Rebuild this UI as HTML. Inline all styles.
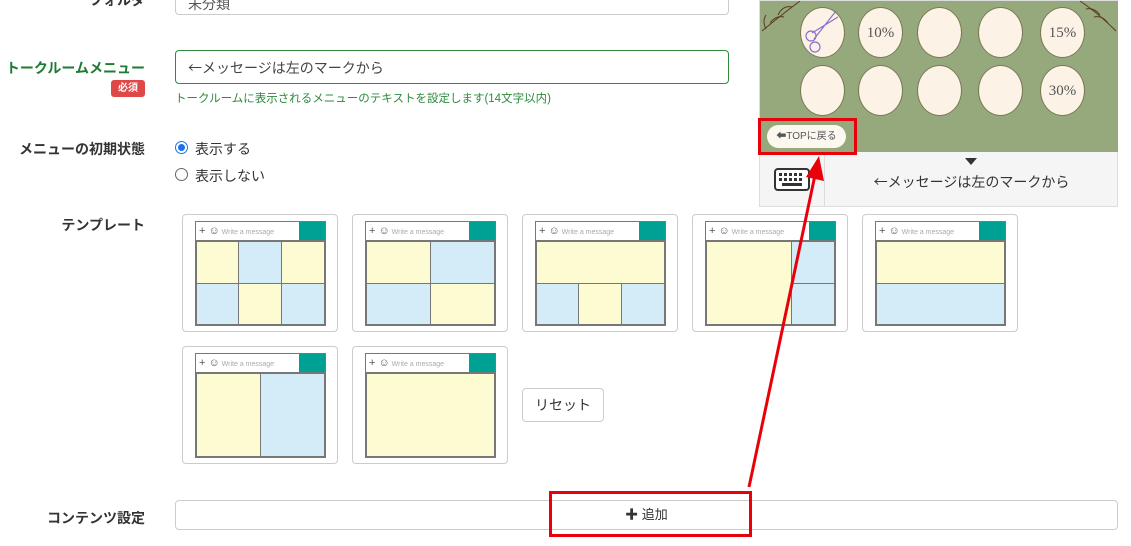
<!DOCTYPE html>
<html><head><meta charset="utf-8"><style>
*{box-sizing:border-box;margin:0;padding:0}
body{width:1131px;height:546px;overflow:hidden;background:#fff;font-family:"Liberation Sans","Noto Sans CJK JP",sans-serif;position:relative;color:#333}
.a{position:absolute}
.ar{font-family:"Noto Sans CJK JP",sans-serif}
.lbl{font-size:14px;font-weight:bold;text-align:right;width:145px;left:0}
.card{position:absolute;width:156px;height:118px;border:1px solid #ccc;border-radius:4px;background:#fff}
.scr{position:absolute;left:12px;top:6px;width:131px;height:105px;border:1px solid #777;background:#fff}
.hd{position:absolute;left:0;top:0;width:100%;height:19px;border-bottom:1px solid #777;font-size:7px;color:#aaa;line-height:18px;padding-left:3px;white-space:nowrap}
.hd b{font-weight:normal;color:#555;font-size:11px}
.tl{position:absolute;right:0;top:0;width:26px;height:18px;background:#00a195}
.c{position:absolute;border:1px solid #777}
.Y{background:#fdfbd1}.B{background:#d3ecf7}
.o{position:absolute;width:45px;height:51px;border-radius:50%;background:#fdf2e6;border:1px solid #7a7a55;font-family:"Liberation Serif",serif;font-size:15px;color:#555;text-align:center;line-height:51px}
</style></head><body>
<div class="a lbl" style="top:-10px">フォルダ</div>
<div class="a" style="left:175px;top:-16px;width:554px;height:31px;border:1px solid #ccc;border-radius:4px;font-size:14px;padding:9px 12px;color:#555">未分類</div>

<div class="a lbl" style="top:58px;color:#1e7b34">トークルームメニュー</div>
<div class="a" style="left:111px;top:80px;width:34px;height:17px;background:#e04848;color:#fff;font-size:10px;font-weight:bold;border-radius:3px;text-align:center;line-height:17px">必須</div>
<div class="a" style="left:175px;top:50px;width:554px;height:34px;border:1px solid #2e8b3e;border-radius:4px;font-size:14px;padding:7px 12px;color:#444"><span class="ar">←</span>メッセージは左のマークから</div>
<div class="a" style="left:175px;top:90px;font-size:11.5px;color:#2e8b3e">トークルームに表示されるメニューのテキストを設定します(14文字以内)</div>

<div class="a lbl" style="top:139px">メニューの初期状態</div>
<div class="a" style="left:175px;top:141px;width:13px;height:13px;border-radius:50%;border:1px solid #1a73e8;background:#fff"><div style="margin:2px;width:7px;height:7px;border-radius:50%;background:#1a73e8"></div></div>
<div class="a" style="left:195px;top:139px;font-size:14px">表示する</div>
<div class="a" style="left:175px;top:168px;width:13px;height:13px;border-radius:50%;border:1px solid #666"></div>
<div class="a" style="left:195px;top:166px;font-size:14px">表示しない</div>

<div class="a lbl" style="top:215px">テンプレート</div>

<div class="card" style="left:182px;top:214px"><div class="scr"><div class="hd"><b>+ ☺</b> Write a message</div><div class="tl"></div>
<div class="c Y" style="left:0;top:19px;width:43px;height:43px"></div><div class="c B" style="left:42px;top:19px;width:44px;height:43px"></div><div class="c Y" style="left:85px;top:19px;width:44px;height:43px"></div>
<div class="c B" style="left:0;top:61px;width:43px;height:42px"></div><div class="c Y" style="left:42px;top:61px;width:44px;height:42px"></div><div class="c B" style="left:85px;top:61px;width:44px;height:42px"></div></div></div>

<div class="card" style="left:352px;top:214px"><div class="scr"><div class="hd"><b>+ ☺</b> Write a message</div><div class="tl"></div>
<div class="c Y" style="left:0;top:19px;width:65px;height:43px"></div><div class="c B" style="left:64px;top:19px;width:65px;height:43px"></div>
<div class="c B" style="left:0;top:61px;width:65px;height:42px"></div><div class="c Y" style="left:64px;top:61px;width:65px;height:42px"></div></div></div>

<div class="card" style="left:522px;top:214px"><div class="scr"><div class="hd"><b>+ ☺</b> Write a message</div><div class="tl"></div>
<div class="c Y" style="left:0;top:19px;width:129px;height:43px"></div>
<div class="c B" style="left:0;top:61px;width:43px;height:42px"></div><div class="c Y" style="left:42px;top:61px;width:44px;height:42px"></div><div class="c B" style="left:85px;top:61px;width:44px;height:42px"></div></div></div>

<div class="card" style="left:692px;top:214px"><div class="scr"><div class="hd"><b>+ ☺</b> Write a message</div><div class="tl"></div>
<div class="c Y" style="left:0;top:19px;width:86px;height:84px"></div><div class="c B" style="left:85px;top:19px;width:44px;height:43px"></div><div class="c B" style="left:85px;top:61px;width:44px;height:42px"></div></div></div>

<div class="card" style="left:862px;top:214px"><div class="scr"><div class="hd"><b>+ ☺</b> Write a message</div><div class="tl"></div>
<div class="c Y" style="left:0;top:19px;width:129px;height:43px"></div><div class="c B" style="left:0;top:61px;width:129px;height:42px"></div></div></div>

<div class="card" style="left:182px;top:346px"><div class="scr"><div class="hd"><b>+ ☺</b> Write a message</div><div class="tl"></div>
<div class="c Y" style="left:0;top:19px;width:65px;height:84px"></div><div class="c B" style="left:64px;top:19px;width:65px;height:84px"></div></div></div>

<div class="card" style="left:352px;top:346px"><div class="scr"><div class="hd"><b>+ ☺</b> Write a message</div><div class="tl"></div>
<div class="c Y" style="left:0;top:19px;width:129px;height:84px"></div></div></div>

<div class="a" style="left:522px;top:388px;width:82px;height:34px;border:1px solid #ccc;border-radius:4px;font-size:14px;text-align:center;line-height:32px">リセット</div>

<div class="a lbl" style="top:508px">コンテンツ設定</div>
<div class="a" style="left:175px;top:500px;width:943px;height:30px;border:1px solid #ccc;border-radius:4px;font-size:13px;text-align:center;line-height:28px;color:#333"><b>✚</b> 追加</div>

<!-- preview -->
<div class="a" style="left:759px;top:0;width:359px;height:207px;border:1px solid #ddd;background:#f5f5f5">
<div class="a" style="left:0;top:0;width:358px;height:151px;background:#95a97d"></div>
<svg class="a" style="left:0;top:0" width="358" height="151"><g stroke="#5a3a22" fill="none" stroke-width="1"><path d="M2 30 Q20 15 40 0"/><path d="M10 22 q6 -8 14 -6"/><path d="M18 14 q5 -10 14 -8"/><path d="M6 28 q-4 -8 0 -14"/><path d="M356 30 Q338 12 320 0"/><path d="M348 22 q-6 -8 -14 -6"/><path d="M340 14 q-6 -8 -14 -6"/></g></svg>
<div class="o" style="left:40px;top:6px"></div>
<svg class="a" style="left:44px;top:8px" width="38" height="45"><g stroke="#8a6fd0" fill="none" stroke-width="1.2"><path d="M32 2 L10 30 M34 8 L8 24"/><circle cx="7" cy="27" r="5"/><circle cx="11" cy="38" r="5"/></g></svg>
<div class="o" style="left:98px;top:6px">10%</div>
<div class="o" style="left:157px;top:6px"></div>
<div class="o" style="left:218px;top:6px"></div>
<div class="o" style="left:280px;top:6px">15%</div>
<div class="o" style="left:40px;top:64px"></div>
<div class="o" style="left:98px;top:64px"></div>
<div class="o" style="left:157px;top:64px"></div>
<div class="o" style="left:218px;top:64px"></div>
<div class="o" style="left:280px;top:64px">30%</div>
<div class="a" style="left:7px;top:124px;width:79px;height:23px;background:#fcf8f0;border-radius:12px;font-size:10px;text-align:center;line-height:23px;color:#555">⬅TOPに戻る</div>
<div class="a" style="left:64px;top:151px;width:1px;height:55px;background:#ddd"></div>
<svg class="a" style="left:14px;top:167px" width="36" height="24"><rect x="1" y="1" width="34" height="21" rx="3" fill="#fff" stroke="#333" stroke-width="2"/><g fill="#333"><rect x="5" y="5" width="3" height="3"/><rect x="10" y="5" width="3" height="3"/><rect x="15" y="5" width="3" height="3"/><rect x="20" y="5" width="3" height="3"/><rect x="25" y="5" width="3" height="3"/><rect x="5" y="10" width="3" height="3"/><rect x="10" y="10" width="3" height="3"/><rect x="15" y="10" width="3" height="3"/><rect x="20" y="10" width="3" height="3"/><rect x="25" y="10" width="3" height="3"/><rect x="8" y="15" width="20" height="3"/></g></svg>
<div class="a" style="left:205px;top:157px;width:0;height:0;border-left:6px solid transparent;border-right:6px solid transparent;border-top:7px solid #333"></div>
<div class="a" style="left:65px;top:171px;width:293px;text-align:center;font-size:14px;color:#333"><span class="ar">←</span>メッセージは左のマークから</div>
</div>

<div class="a" style="left:758px;top:118px;width:99px;height:37px;border:3px solid #e8000a"></div>
<div class="a" style="left:549px;top:491px;width:203px;height:46px;border:3px solid #e8000a"></div>
<svg class="a" style="left:0;top:0" width="1131" height="546"><line x1="749" y1="487" x2="815" y2="175" stroke="#e8000a" stroke-width="3"/><polygon points="819,156 824,181 806,177" fill="#e8000a"/></svg>
</body></html>
